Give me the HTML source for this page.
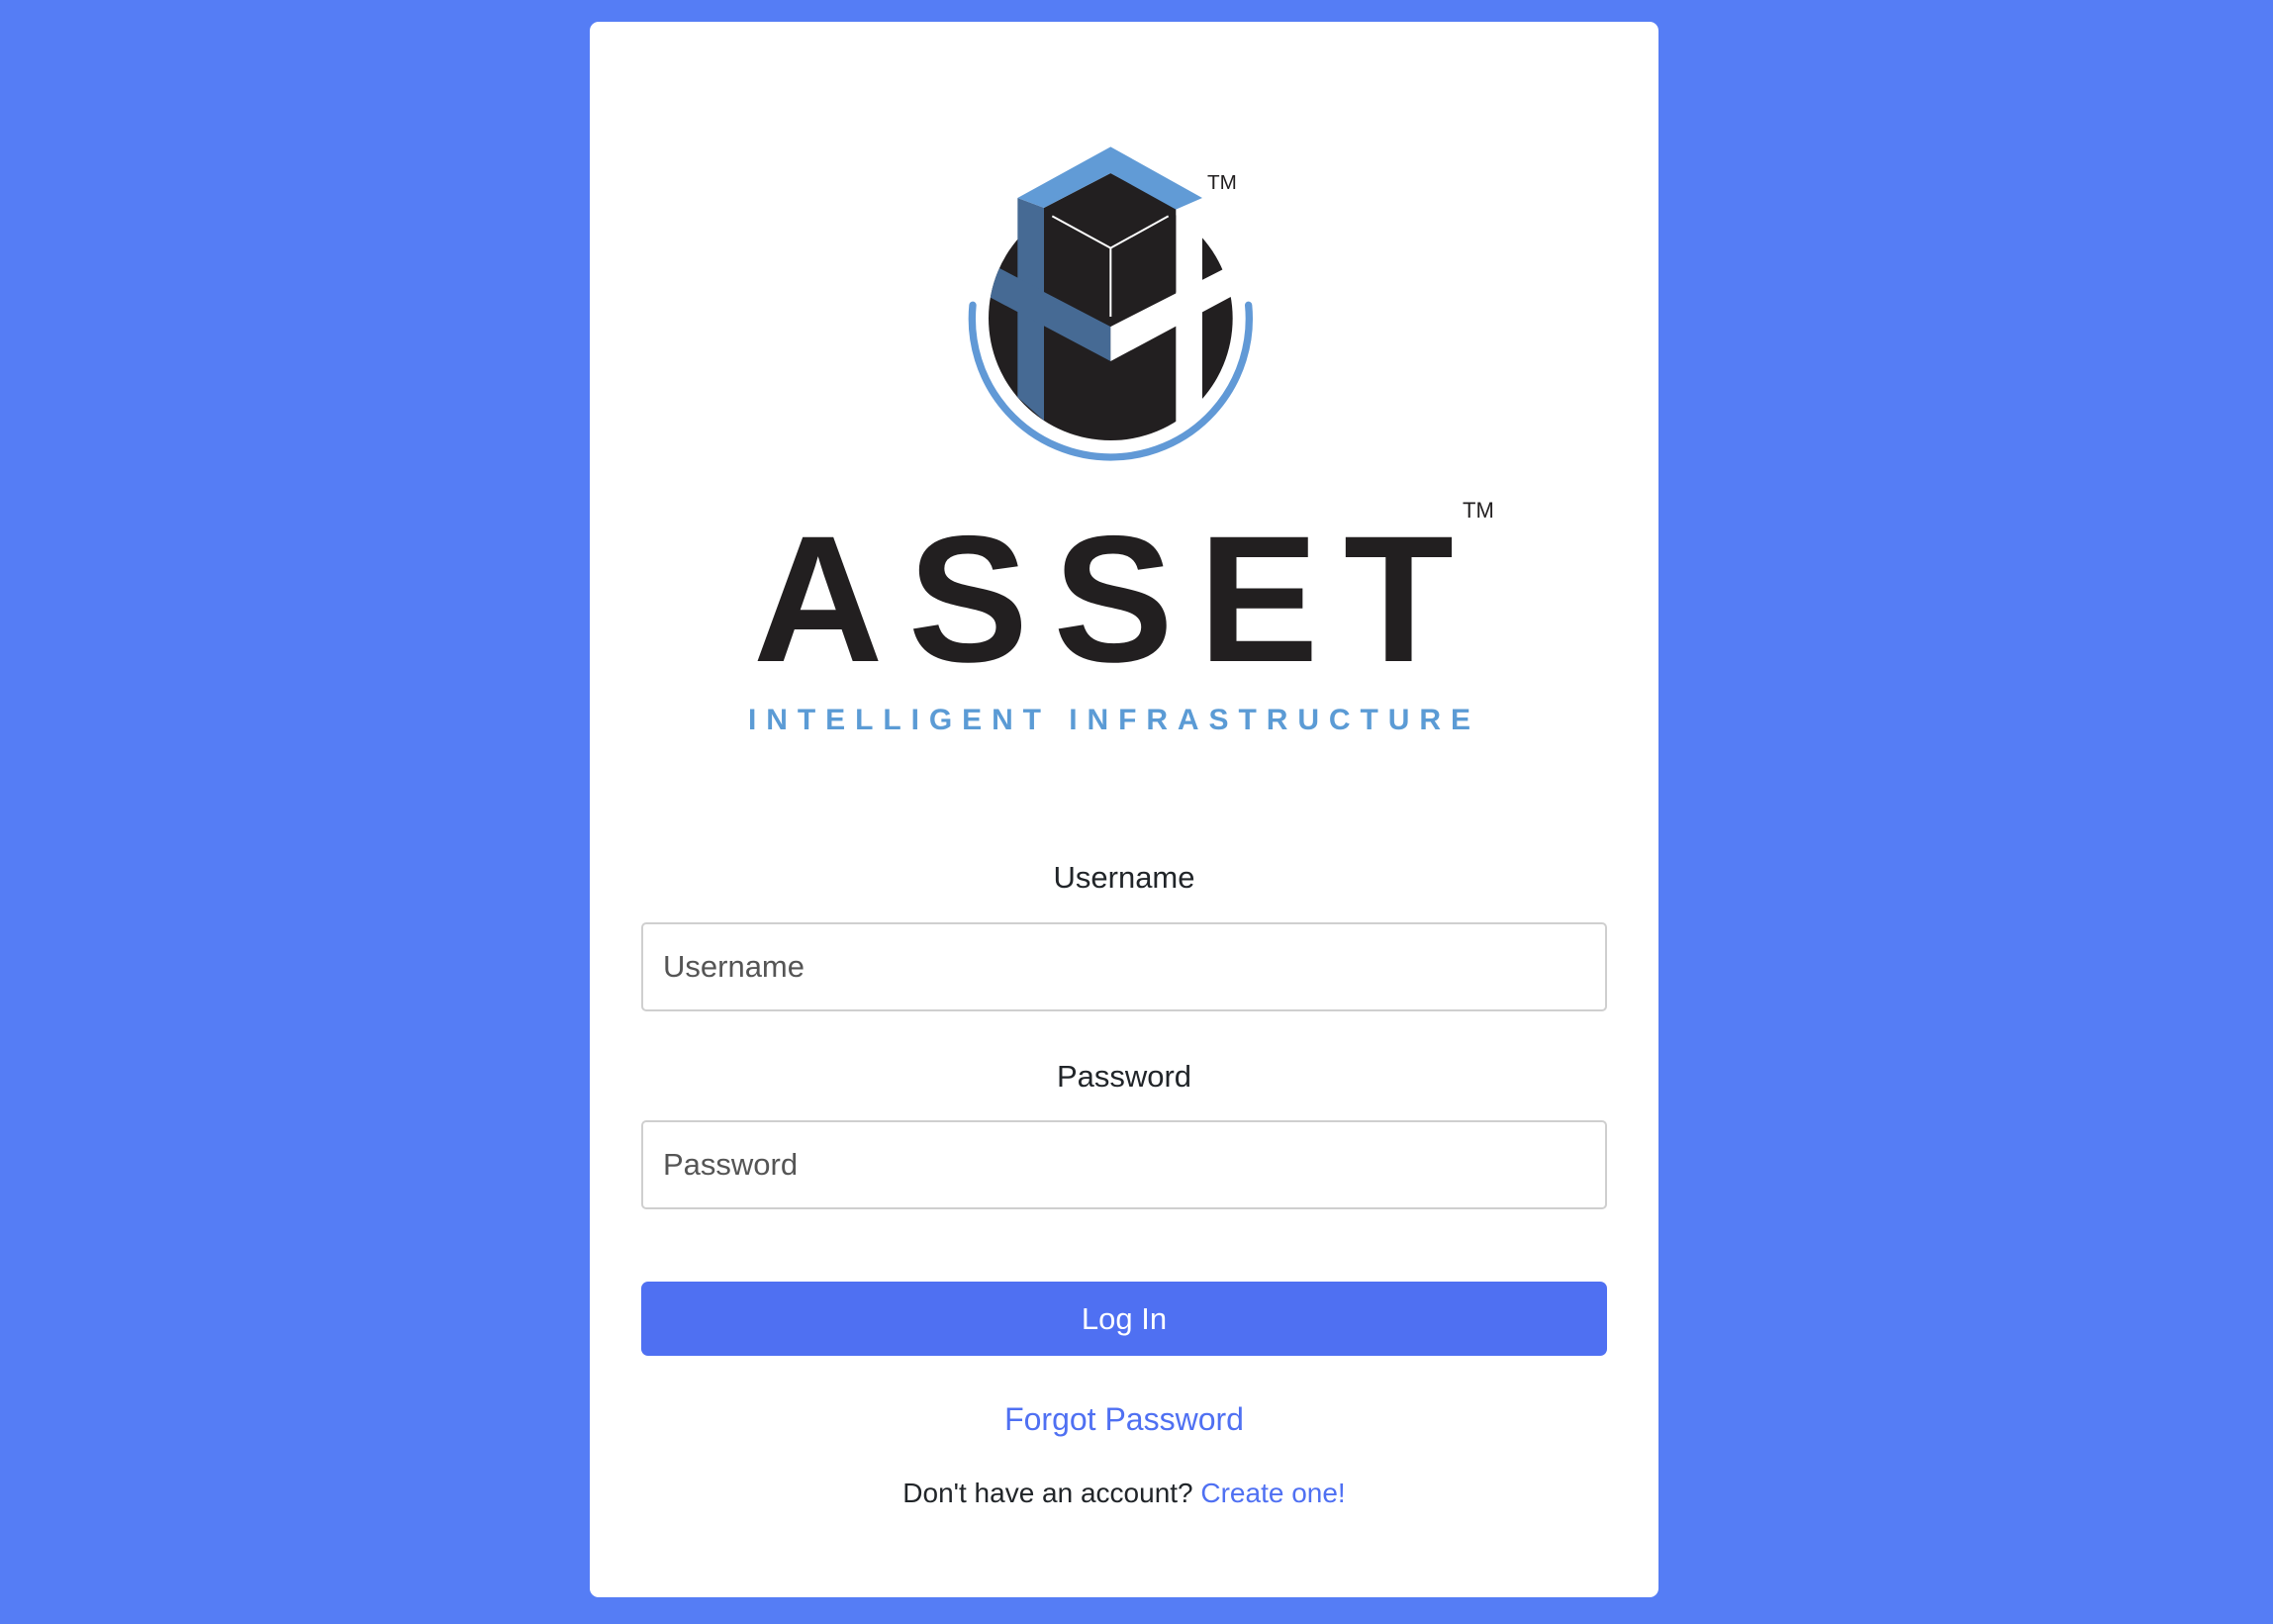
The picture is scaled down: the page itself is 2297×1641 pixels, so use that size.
<!DOCTYPE html>
<html><head><meta charset="utf-8"><style>
html,body{margin:0;padding:0;width:2297px;height:1641px;background:#557df5;overflow:hidden;font-family:"Liberation Sans",Arial,sans-serif;}
.card{position:absolute;left:596px;top:22px;width:1080px;height:1592px;background:#fff;border-radius:9px;}
.lbl{position:absolute;left:0;width:100%;text-align:center;font-size:31px;color:#212529;}
.inp{position:absolute;left:52px;width:976px;height:90px;border:2px solid #cfcfcf;border-radius:5px;box-sizing:border-box;font-size:31px;color:#555;padding-left:20px;line-height:86px;}
.btn{position:absolute;left:52px;top:1273px;width:976px;height:75px;background:#4f70f2;border-radius:7px;color:#fff;font-size:31px;text-align:center;line-height:75px;}
</style></head><body>
<div class="card">
<svg style="position:absolute;left:0;top:0" width="1080" height="760">
<text x="165" y="646" font-family="Liberation Sans" font-weight="bold" font-size="182" fill="#221f20" textLength="708" lengthAdjust="spacing">ASSET</text>
<text x="882" y="501" font-family="Liberation Sans" font-size="22" fill="#221f20">TM</text>
<text x="160" y="715" font-family="Liberation Sans" font-weight="bold" font-size="30" fill="#5b9bd5" textLength="730" lengthAdjust="spacing">INTELLIGENT INFRASTRUCTURE</text>
</svg>
<div class="lbl" style="top:847px">Username</div>
<div class="inp" style="top:910px">Username</div>
<div class="lbl" style="top:1048px">Password</div>
<div class="inp" style="top:1110px">Password</div>
<div class="btn">Log In</div>
<div class="lbl" style="top:1394px;font-size:32px;color:#4f70f2">Forgot Password</div>
<div class="lbl" style="top:1471px;font-size:28px">Don't have an account? <span style="color:#4f70f2">Create one!</span></div>
</div>
<svg style="position:absolute;left:960px;top:130px" width="320" height="350" viewBox="0 0 960 1050">
<defs><clipPath id="c"><circle cx="487" cy="575" r="370"/></clipPath></defs>
<circle cx="487" cy="575" r="370" fill="#221f20"/>
<polygon points="205,210 285,240 285,885 205,814" fill="#466a94"/>
<polygon points="135,415 487,600 487,705 100,500" fill="#466a94" clip-path="url(#c)"/>
<rect x="685" y="240" width="80" height="660" fill="#fff"/>
<polygon points="487,600 870,405 870,500 487,705" fill="#fff"/>
<polygon points="487,135 685,240 685,495 487,600 285,495 285,240" fill="#221f20"/>
<polyline points="310,265 487,362 662,265" fill="none" stroke="#fff" stroke-width="6"/>
<line x1="487" y1="362" x2="487" y2="570" stroke="#fff" stroke-width="6"/>
<polygon points="205,210 487,55 765,210 685,245 487,135 285,240" fill="#619bd6"/>
<path d="M69 535 A420 420 0 1 0 905 535" fill="none" stroke="#6199d6" stroke-width="22" stroke-linecap="round"/>
<text x="780" y="183" font-family="Liberation Sans" font-size="62" fill="#221f20">TM</text>
</svg>
</body></html>
